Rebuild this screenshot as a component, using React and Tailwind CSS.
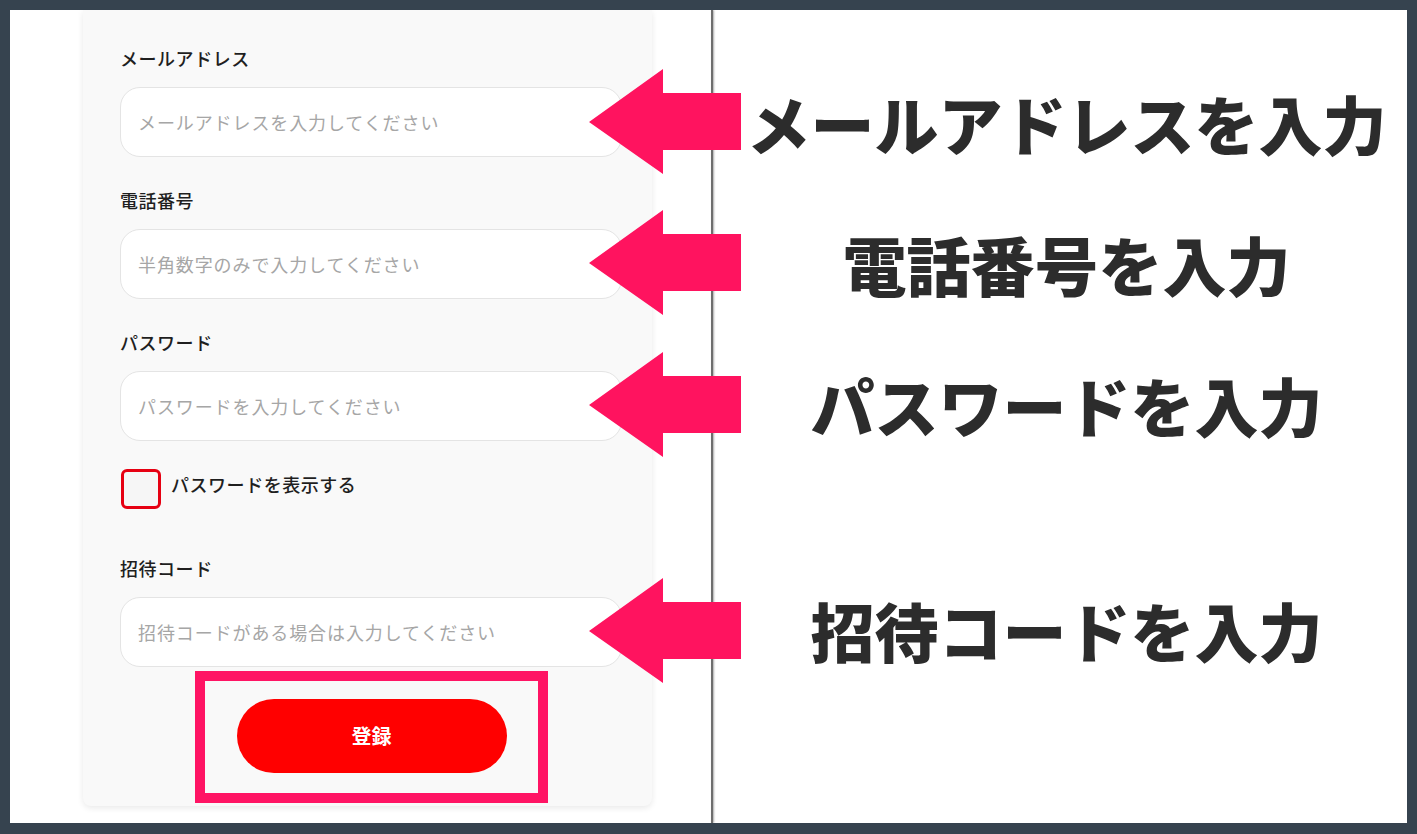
import React from "react";

const jp = { fontFamily: '"Noto Sans CJK JP", "Noto Sans", sans-serif' };

function Field({ label, placeholder, className = "" }) {
  return (
    <div className={className}>
      <div className="h-6 leading-6 text-[18px] tracking-[0.03em] font-medium text-[#1f1f1f]">{label}</div>
      <div className="mt-[17px] h-[70px] w-full rounded-[20px] border border-[#e4e4e4] bg-white flex items-center px-[17px]">
        <span className="text-[18px] tracking-[0.05em] text-[#a6a6a6]">{placeholder}</span>
      </div>
    </div>
  );
}

function Arrow({ cy }) {
  const pts = [
    [589, cy],
    [663, cy - 53],
    [663, cy - 29],
    [741, cy - 29],
    [741, cy + 28],
    [663, cy + 28],
    [663, cy + 52],
  ]
    .map((p) => p.join(","))
    .join(" ");
  return <polygon points={pts} fill="#ff135f" />;
}

export default function App() {
  return (
    <div
      className="relative w-[1417px] h-[834px] bg-[#36434f] pt-[10px] pl-[10px] pr-[10px] pb-[11px]"
      style={jp}
    >
      <div className="flex h-full w-full bg-white overflow-hidden">
        {/* Left panel */}
        <div className="w-[701px] shrink-0 flex">
          <div className="ml-[73px] w-[569px] self-start bg-[#f9f9f9] rounded-b-[8px] shadow-[0_2px_6px_rgba(0,0,0,0.09)] pl-[37px] pr-[30px] pt-[36px] pb-[3px]">
            <Field label="メールアドレス" placeholder="メールアドレスを入力してください" />
            <Field className="mt-[31px]" label="電話番号" placeholder="半角数字のみで入力してください" />
            <Field className="mt-[31px]" label="パスワード" placeholder="パスワードを入力してください" />
            <div className="mt-[28px] flex items-start">
              <div className="h-[40px] w-[40px] rounded-[6px] border-[3px] border-[#e60012] bg-[#f6f6f6] ml-[1px]" />
              <span className="ml-[10px] mt-[3px] leading-6 text-[18px] tracking-[0.03em] font-medium text-[#1f1f1f]">
                パスワードを表示する
              </span>
            </div>
            <Field className="mt-[47px]" label="招待コード" placeholder="招待コードがある場合は入力してください" />
            <div className="mt-[4px] ml-[75px] w-[353px] h-[132px] border-[10px] border-[#ff1464] flex items-center justify-center">
              <button className="mt-[-2px] w-[270px] h-[74px] rounded-full bg-[#ff0000] text-white font-bold text-[20px]">
                登録
              </button>
            </div>
          </div>
        </div>

        {/* Divider */}
        <div className="w-[2px] shrink-0 bg-[#6e6e6e] shadow-[1px_0_2px_rgba(0,0,0,0.35)]" />

        {/* Right panel */}
        <div className="flex-1 flex flex-col items-center pl-[13px] pt-[72px] text-[#2c2c2c] font-black text-[64px]">
          <div className="h-[80px] leading-[80px] whitespace-nowrap">メールアドレスを入力</div>
          <div className="mt-[61px] h-[80px] leading-[80px] whitespace-nowrap">電話番号を入力</div>
          <div className="mt-[61px] h-[80px] leading-[80px] whitespace-nowrap">パスワードを入力</div>
          <div className="mt-[145px] h-[80px] leading-[80px] whitespace-nowrap">招待コードを入力</div>
        </div>
      </div>

      {/* Annotation arrows */}
      <svg
        className="absolute top-0 left-0 pointer-events-none"
        width="1417"
        height="834"
        viewBox="0 0 1417 834"
      >
        <Arrow cy={122} />
        <Arrow cy={263} />
        <Arrow cy={405} />
        <Arrow cy={631} />
      </svg>
    </div>
  );
}
